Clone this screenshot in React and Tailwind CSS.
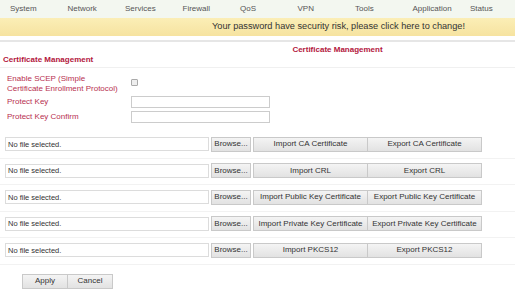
const navItems = ['System', 'Network', 'Services', 'Firewall', 'QoS', 'VPN', 'Tools', 'Application', 'Status']

const certRows = [
  { imp: 'Import CA Certificate', exp: 'Export CA Certificate' },
  { imp: 'Import CRL', exp: 'Export CRL' },
  { imp: 'Import Public Key Certificate', exp: 'Export Public Key Certificate' },
  { imp: 'Import Private Key Certificate', exp: 'Export Private Key Certificate' },
  { imp: 'Import PKCS12', exp: 'Export PKCS12' },
]

const btn = 'h-[15px] border border-[#c9c9c9] bg-gradient-to-b from-[#f4f4f4] to-[#e2e2e2] text-[#333] text-[8px] leading-none flex items-center justify-center'

export default function App() {
  return (
    <div className="w-[515px] h-[293px] bg-white overflow-hidden font-['Liberation_Sans',Arial,sans-serif]">
      <div className="h-[18px] bg-[#f3f7f0] flex items-center pl-[10px] text-[8px] text-[#555]">
        {navItems.map(item => (
          <div key={item} className="w-[57.5px] shrink-0">{item}</div>
        ))}
      </div>
      <div className="h-[18px] bg-gradient-to-b from-[#fbeeb6] to-[#f6e3a0] flex items-center justify-end pr-[50px] text-[9.2px] text-[#333]">
        Your password have security risk, please click here to change!
      </div>
      <div className="h-[4px]" />
      <div className="h-[2px] bg-[#e6e6e6]" />

      <div className="ml-[160px] h-[14px] flex items-end justify-center text-[8px] font-bold text-[#b3163c]">
        Certificate Management
      </div>
      <div className="pl-[3px] h-[12px] flex items-end text-[8px] font-bold text-[#b3163c] border-b border-[#f0f0f0] pb-[1px]">
        Certificate Management
      </div>

      <div className="pl-[7px] mt-[6px] text-[8px] text-[#b8304f]">
        <div className="flex items-center h-[20px]">
          <div className="w-[124px] leading-[10px]">Enable SCEP (Simple<br />Certificate Enrollment Protocol)</div>
          <div className="w-[7px] h-[7px] border border-[#aaa] bg-[#eee] rounded-[1px] -mt-[3px]" />
        </div>
        <div className="flex items-center h-[15px]">
          <div className="w-[124px]">Protect Key</div>
          <div className="w-[139px] h-[12px] border border-[#ccc] bg-white" />
        </div>
        <div className="flex items-center h-[15px]">
          <div className="w-[124px]">Protect Key Confirm</div>
          <div className="w-[139px] h-[12px] border border-[#ccc] bg-white" />
        </div>
      </div>

      <div className="mt-[8px] flex flex-col">
        {certRows.map(row => (
          <div key={row.imp} className="h-[26.5px] border-b border-[#f2f2f2] flex items-center pl-[5px] pb-[1px]">
            <div className="w-[204px] h-[14px] border border-[#dcdcdc] bg-white flex items-center pl-[2px] text-[7.5px] text-[#333]">No file selected.</div>
            <div className={`${btn} w-[40px] ml-[2px]`}>Browse...</div>
            <div className={`${btn} w-[115px] ml-[2px]`}>{row.imp}</div>
            <div className={`${btn} w-[115px] -ml-px`}>{row.exp}</div>
          </div>
        ))}
      </div>

      <div className="flex pl-[22px] mt-[9px]">
        <div className={`${btn} w-[46px]`}>Apply</div>
        <div className={`${btn} w-[46px] -ml-px`}>Cancel</div>
      </div>
    </div>
  )
}
